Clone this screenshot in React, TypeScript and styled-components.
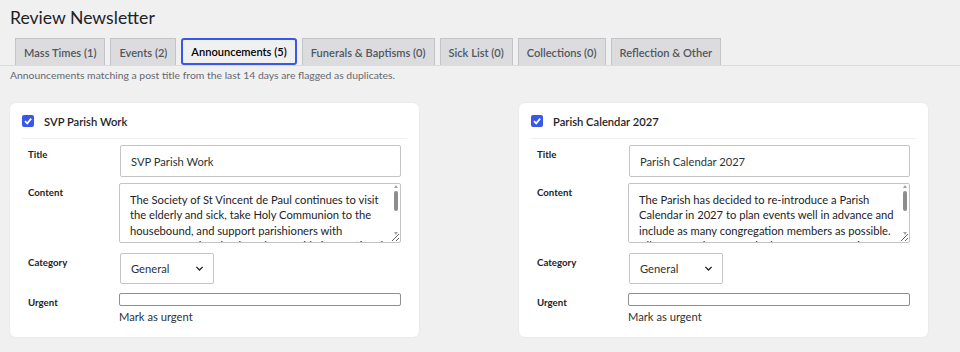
import React from 'react';
import styled, { createGlobalStyle } from 'styled-components';

const GlobalStyle = createGlobalStyle`
  html, body {
    margin: 0;
    padding: 0;
    background: #f0f0f1;
    font-family: Lato, 'Noto Sans', sans-serif;
    color: #1d2327;
  }
`;

const Page = styled.div`
  padding: 0 10px;
  width: 960px;
  height: 352px;
  box-sizing: border-box;
  overflow: hidden;
`;

const Heading = styled.h1`
  margin: 0;
  padding-top: 5px;
  font-size: 17.6px;
  font-weight: 400;
  line-height: 26px;
  color: #1d2327;
`;

const TabBar = styled.div`
  display: flex;
  gap: 5px;
  margin: 7px -10px 0 -10px;
  padding-left: 15px;
  border-bottom: 1px solid #dcdcde;
`;

const Tab = styled.div<{ $active?: boolean }>`
  height: 27px;
  box-sizing: border-box;
  display: flex;
  align-items: center;
  padding: 0 8px;
  font-size: 11.1px;
  font-weight: 600;
  color: ${(p) => (p.$active ? '#000' : '#50575e')};
  background: ${(p) => (p.$active ? '#f0f0f1' : '#dcdcde')};
  border: ${(p) => (p.$active ? '2px solid #3858e9' : '1px solid #c3c4c7')};
  border-bottom: ${(p) => (p.$active ? '2px solid #3858e9' : 'none')};
  border-radius: ${(p) => (p.$active ? '3px' : '0')};
`;

const Note = styled.p`
  margin: 1px 0 0;
  font-size: 10.4px;
  line-height: 16px;
  color: #646970;
`;

const Grid = styled.div`
  display: grid;
  grid-template-columns: 409px 409px;
  column-gap: 100px;
  margin-top: 20px;
`;

const Card = styled.div`
  background: #fff;
  border-radius: 6px;
  box-shadow: 0 0 0 1px #ebebeb;
  padding: 0 12px 13px;
`;

const CardHeader = styled.div`
  display: flex;
  align-items: center;
  gap: 10px;
  height: 34px;
  padding-top: 1px;
  border-bottom: 1px solid #f0f0f1;
  font-size: 11.2px;
  font-weight: 600;
  color: #1d2327;
`;

const Check = styled.span`
  width: 12px;
  height: 12px;
  border-radius: 2px;
  background: #3858e9;
  display: flex;
  align-items: center;
  justify-content: center;
`;

const Rows = styled.div`
  padding: 6px 6px 0;
  display: flex;
  flex-direction: column;
`;

const Row = styled.div<{ $gap?: number }>`
  display: grid;
  grid-template-columns: 91px 1fr;
  margin-bottom: ${(p) => p.$gap ?? 6}px;
`;

const Label = styled.div`
  font-size: 9.7px;
  font-weight: 700;
  line-height: 14px;
  padding-top: 2px;
`;

const TextInput = styled.div`
  height: 32px;
  box-sizing: border-box;
  border: 1px solid #c3c4c7;
  border-radius: 2px;
  padding: 0 10px;
  display: flex;
  align-items: center;
  font-size: 11.2px;
  color: #2c3338;
  margin-left: 1px;
`;

const AreaWrap = styled.div`
  position: relative;
  height: 60px;
`;

const TextArea = styled.textarea`
  height: 60px;
  box-sizing: border-box;
  width: 100%;
  border: 1px solid #c3c4c7;
  border-radius: 2px;
  padding: 7.5px 12px 4px 10px;
  font-family: inherit;
  font-size: 11.2px;
  line-height: 15.6px;
  color: #1d2327;
  resize: vertical;
  overflow: hidden;
  white-space: pre;
  margin: 0;
  display: block;
`;

const ScrollBar = styled.div`
  position: absolute;
  top: 2px;
  right: 2px;
  bottom: 8px;
  width: 7px;
  display: flex;
  flex-direction: column;
  align-items: center;
  pointer-events: none;
`;

const Arrow = styled.span<{ $down?: boolean }>`
  width: 0;
  height: 0;
  border-left: 2.5px solid transparent;
  border-right: 2.5px solid transparent;
  ${(p) =>
    p.$down ? 'border-top: 3px solid #a3a3a3; margin-top: auto;' : 'border-bottom: 3px solid #a3a3a3;'}
`;

const Thumb = styled.span`
  width: 4px;
  height: 20px;
  margin-top: 3px;
  border-radius: 2px;
  background: #8d8d8d;
`;

const Select = styled.div`
  width: 94px;
  height: 31px;
  box-sizing: border-box;
  border: 1px solid #c3c4c7;
  border-radius: 2px;
  margin-left: 1px;
  padding: 0 9px 0 10px;
  display: flex;
  align-items: center;
  justify-content: space-between;
  font-size: 11.2px;
  color: #2c3338;
`;

const UrgentBox = styled.div`
  height: 13px;
  box-sizing: border-box;
  border: 1px solid #8c8f94;
  border-radius: 2px;
`;

const Hint = styled.div`
  margin-top: 4px;
  font-size: 11.2px;
  line-height: 14px;
  color: #2c3338;
`;

const tabs = [
  'Mass Times (1)',
  'Events (2)',
  'Announcements (5)',
  'Funerals & Baptisms (0)',
  'Sick List (0)',
  'Collections (0)',
  'Reflection & Other',
];

const items = [
  {
    title: 'SVP Parish Work',
    content: [
      'The Society of St Vincent de Paul continues to visit',
      'the elderly and sick, take Holy Communion to the',
      'housebound, and support parishioners with',
      'transport to Church. They also provide international',
      'aid through twinning projects.',
    ].join('\n'),
  },
  {
    title: 'Parish Calendar 2027',
    content: [
      'The Parish has decided to re-introduce a Parish',
      'Calendar in 2027 to plan events well in advance and',
      'include as many congregation members as possible.',
      'All PPC members are asked to meet for a review of',
      'the dates.',
    ].join('\n'),
  },
];

const Chevron = () => (
  <svg width="9" height="9" viewBox="0 0 10 10">
    <path d="M1.5 3.2 L5 6.7 L8.5 3.2" fill="none" stroke="#1d2327" strokeWidth="1.5" />
  </svg>
);

const Tick = () => (
  <svg width="10" height="10" viewBox="0 0 10 10">
    <path d="M2 5.2 L4.2 7.4 L8.2 2.6" fill="none" stroke="#fff" strokeWidth="1.7" />
  </svg>
);

const AnnouncementCard = ({ title, content }: { title: string; content: string }) => (
  <Card>
    <CardHeader>
      <Check>
        <Tick />
      </Check>
      {title}
    </CardHeader>
    <Rows>
      <Row>
        <Label>Title</Label>
        <TextInput>{title}</TextInput>
      </Row>
      <Row $gap={10}>
        <Label>Content</Label>
        <AreaWrap>
          <TextArea defaultValue={content} />
          <ScrollBar>
            <Arrow />
            <Thumb />
            <Arrow $down />
          </ScrollBar>
        </AreaWrap>
      </Row>
      <Row $gap={9}>
        <Label>Category</Label>
        <Select>
          General
          <Chevron />
        </Select>
      </Row>
      <Row $gap={0}>
        <Label>Urgent</Label>
        <div>
          <UrgentBox />
          <Hint>Mark as urgent</Hint>
        </div>
      </Row>
    </Rows>
  </Card>
);

export default function App() {
  return (
    <Page>
      <GlobalStyle />
      <Heading>Review Newsletter</Heading>
      <TabBar>
        {tabs.map((t) => (
          <Tab key={t} $active={t.startsWith('Announcements')}>
            {t}
          </Tab>
        ))}
      </TabBar>
      <Note>Announcements matching a post title from the last 14 days are flagged as duplicates.</Note>
      <Grid>
        {items.map((it) => (
          <AnnouncementCard key={it.title} {...it} />
        ))}
      </Grid>
    </Page>
  );
}
